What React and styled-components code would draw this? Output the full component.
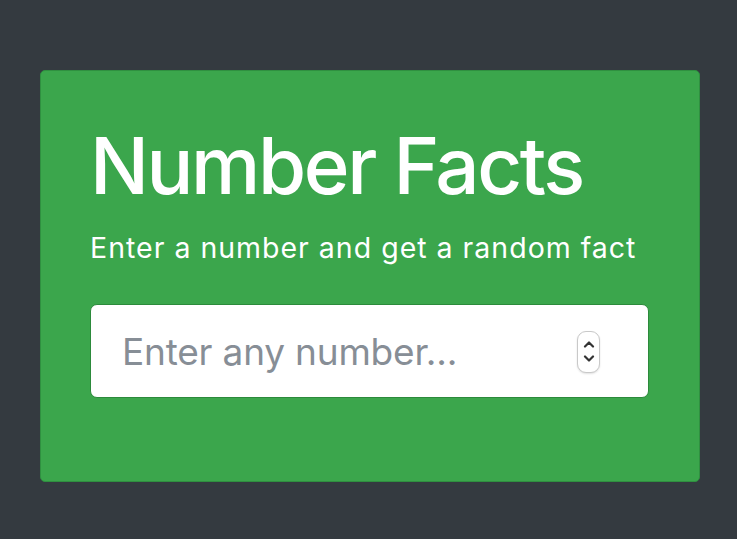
import React from "react";
import styled, { createGlobalStyle } from "styled-components";

const Global = createGlobalStyle`
  html, body { margin: 0; padding: 0; background: #343a40; }
  body { font-family: Inter, "Liberation Sans", Arial, sans-serif; }
  #root { min-height: 539px; }
`;

const Page = styled.div`
  padding: 70px 37px 0 40px;
`;

const Card = styled.section`
  box-sizing: border-box;
  width: 660px;
  height: 412px;
  background: #3ba64c;
  border: 1px solid #2f9040;
  border-radius: 5px;
  padding: 48px 50px 0 49px;
  color: #fff;
`;

const Title = styled.h1`
  margin: 0;
  font-size: 78px;
  font-weight: 500;
  line-height: 1.2;
  letter-spacing: -2.4px;
`;

const Lead = styled.p`
  margin: 14px 0 0;
  font-size: 28.5px;
  line-height: 1.5;
  letter-spacing: 1px;
`;

const Field = styled.label`
  box-sizing: border-box;
  margin-top: 35px;
  display: flex;
  align-items: center;
  height: 94px;
  width: 559px;
  background: #fff;
  border: 1px solid #2c8a3b;
  border-radius: 7px;
  padding: 1px 48px 0 31px;
`;

const Input = styled.input`
  flex: 1;
  min-width: 0;
  border: none;
  outline: none;
  background: transparent;
  font-family: Inter, "Liberation Sans", Arial, sans-serif;
  font-size: 37px;
  line-height: 1.2;
  letter-spacing: -0.2px;
  padding: 0;
  color: #495057;
  &::placeholder { color: #878e96; opacity: 1; }
`;

const Spinner = styled.span`
  box-sizing: border-box;
  width: 23px;
  height: 42px;
  border: 1px solid #c9c9c9;
  border-radius: 9px;
  background: #fff;
  box-shadow: 0 1px 2px rgba(0,0,0,0.12);
  display: flex;
  flex-direction: column;
  align-items: center;
  justify-content: center;
  gap: 7px;
`;

const Chevron = ({ up }) => (
  <svg width="12" height="8" viewBox="0 0 12 8">
    <path
      d={up ? "M2 6.5 L6 2.5 L10 6.5" : "M2 1.5 L6 5.5 L10 1.5"}
      fill="none"
      stroke="#333"
      strokeWidth="2.2"
      strokeLinecap="round"
      strokeLinejoin="round"
    />
  </svg>
);

export default function App() {
  return (
    <>
      <Global />
      <Page>
        <Card>
          <Title>Number Facts</Title>
          <Lead>Enter a number and get a random fact</Lead>
          <Field>
            <Input type="text" placeholder="Enter any number..." />
            <Spinner>
              <Chevron up />
              <Chevron />
            </Spinner>
          </Field>
        </Card>
      </Page>
    </>
  );
}
